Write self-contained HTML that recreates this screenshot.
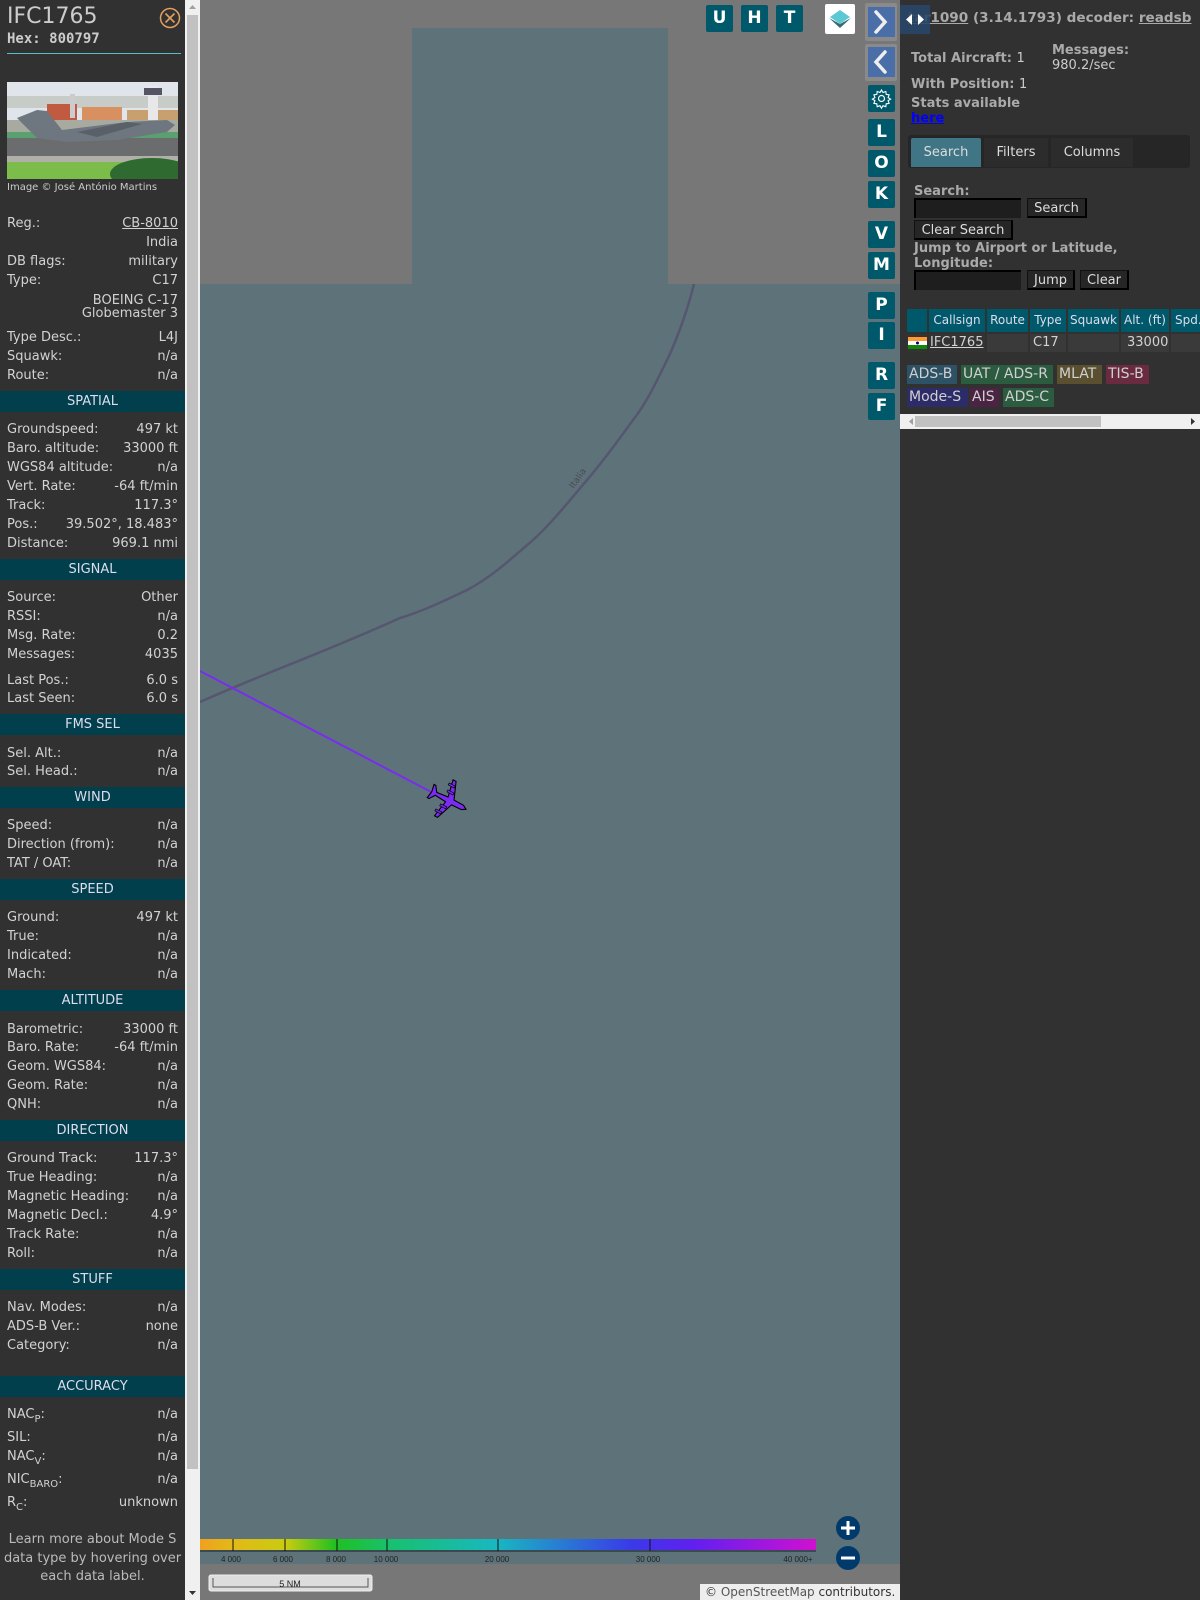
<!DOCTYPE html>
<html><head><meta charset="utf-8"><style>
*{margin:0;padding:0;box-sizing:border-box}
body{width:1200px;height:1600px;overflow:hidden;background:#313131;font-family:"DejaVu Sans","Liberation Sans",sans-serif;font-size:13px;color:#d2d2d2;position:relative}
.a{position:absolute}
#lp{position:absolute;left:0;top:0;width:185px;height:1600px;background:#313131}
.r{position:absolute;left:7px;width:171px;height:18px;line-height:18px;white-space:nowrap;margin-top:2px}
.r .v{position:absolute;right:0;top:0}
.h{position:absolute;left:0;width:185px;height:21px;line-height:21px;background:#003f4b;color:#dde;text-align:center}
sub{font-size:10px;vertical-align:-4px;line-height:0}
.mb{position:absolute;width:27px;height:27px;background:#00596b;color:#fff;font-weight:bold;font-size:17px;text-align:center;line-height:27px;border-radius:2px}
.th{position:absolute;top:309px;height:23px;line-height:23px;background:#00596b;color:#dde;text-align:center;font-size:12px}
.td{position:absolute;top:334px;height:18px;line-height:18px;background:#3a3a3a;font-size:13px;padding-left:3px}
.bd{position:absolute;height:19px;line-height:19px;font-size:14px;padding:0 2px;color:#d0d0d0}
.btn{position:absolute;height:20px;line-height:18px;background:#262626;border:1px solid #111;border-right:2px solid #000;border-bottom:2px solid #000;color:#ddd;font-size:13px;text-align:center}
.inp{position:absolute;height:20px;background:#1e1e1e;border-top:2px solid #000;border-left:2px solid #000}
.lb{position:absolute;font-weight:bold;color:#aaa;font-size:13px}
.cl{position:absolute;top:1555px;font-family:"Liberation Sans",sans-serif;font-size:8px;color:#222;transform:translateX(-50%)}
</style></head><body>

<!-- MAP -->
<div class="a" style="left:200px;top:0;width:700px;height:1600px;background:#5d7379"></div>
<div class="a" style="left:200px;top:0;width:212px;height:284px;background:#777"></div>
<div class="a" style="left:668px;top:0;width:232px;height:284px;background:#777"></div>
<div class="a" style="left:412px;top:0;width:256px;height:28px;background:#777"></div>
<div class="a" style="left:200px;top:1564px;width:700px;height:36px;background:#777"></div>
<svg class="a" style="left:0;top:0" width="900" height="1600">
<path d="M694,284 C685,320 672,350 667,360 C655,385 645,405 633,420 C615,445 600,465 587,480 C570,500 550,525 533,540 C510,560 490,578 467,590 C440,603 420,612 400,618 C330,650 260,675 200,702" fill="none" stroke="#575670" stroke-width="2.5"/>
<text x="580" y="480" transform="rotate(-55 580 480)" font-family="DejaVu Sans" font-size="9" fill="#4a4a5a" text-anchor="middle">Italia</text>
<line x1="200" y1="671" x2="437" y2="795" stroke="#7a2cf0" stroke-width="2"/>
<g transform="translate(448,800) rotate(117.3) scale(1.35)">
<path d="M0,-15 L1.8,-12 L2,-4 L15,1 L15,3.5 L2,1 L1.2,10 L5.5,13 L5.5,14.5 L0,13.5 L-5.5,14.5 L-5.5,13 L-1.2,10 L-2,1 L-15,3.5 L-15,1 L-2,-4 L-1.8,-12 Z" fill="#7a2cf0" stroke="#000" stroke-width="0.8"/>
<rect x="5" y="-1.5" width="1.6" height="5" fill="#7a2cf0" stroke="#000" stroke-width="0.5"/><rect x="10" y="0" width="1.6" height="5" fill="#7a2cf0" stroke="#000" stroke-width="0.5"/>
<rect x="-6.6" y="-1.5" width="1.6" height="5" fill="#7a2cf0" stroke="#000" stroke-width="0.5"/><rect x="-11.6" y="0" width="1.6" height="5" fill="#7a2cf0" stroke="#000" stroke-width="0.5"/>
</g>
<defs><linearGradient id="cg" x1="0" x2="1"><stop offset="0" stop-color="#f0a020"/><stop offset="0.05" stop-color="#e3b818"/><stop offset="0.14" stop-color="#c9cc10"/><stop offset="0.22" stop-color="#20c020"/><stop offset="0.31" stop-color="#18c070"/><stop offset="0.48" stop-color="#18b8c0"/><stop offset="0.7" stop-color="#3a3ae8"/><stop offset="0.8" stop-color="#6020f0"/><stop offset="1" stop-color="#d010d0"/></linearGradient></defs>
<rect x="200" y="1539" width="616" height="12" fill="url(#cg)"/>
<rect x="200" y="1550" width="616" height="2" fill="#3a4a50"/>
<g stroke="#111" stroke-width="1"><line x1="233" y1="1539" x2="233" y2="1551"/><line x1="285" y1="1539" x2="285" y2="1551"/><line x1="337" y1="1539" x2="337" y2="1551"/><line x1="387" y1="1539" x2="387" y2="1551"/><line x1="498" y1="1539" x2="498" y2="1551"/><line x1="650" y1="1539" x2="650" y2="1551"/></g>
<circle cx="848" cy="1528" r="12" fill="#003a6a"/><path d="M841,1528 H855 M848,1521 V1535" stroke="#fff" stroke-width="3"/>
<circle cx="848" cy="1558" r="12" fill="#003a6a"/><path d="M841,1558 H855" stroke="#fff" stroke-width="3"/>
<rect x="209" y="1575" width="163" height="16" rx="2" fill="#ddd" stroke="#eee"/><path d="M213,1578 V1587 H368 V1578" fill="none" stroke="#555" stroke-width="1"/>
<text x="290" y="1587" font-family="Liberation Sans" font-size="9" fill="#222" text-anchor="middle">5 NM</text>
</svg>
<div class="cl" style="left:231px">4 000</div><div class="cl" style="left:283px">6 000</div><div class="cl" style="left:336px">8 000</div><div class="cl" style="left:386px">10 000</div><div class="cl" style="left:497px">20 000</div><div class="cl" style="left:648px">30 000</div><div class="cl" style="left:798px">40 000+</div>
<div class="a" style="left:700px;top:1584px;width:200px;height:16px;background:#eee;font-size:12px;line-height:16px;color:#333;padding-left:5px">© <span style="color:#555">OpenStreetMap</span> contributors.</div>

<!-- map buttons -->
<div class="mb" style="left:706px;top:5px">U</div><div class="mb" style="left:741px;top:5px">H</div><div class="mb" style="left:776px;top:5px">T</div>
<div class="a" style="left:825px;top:4px;width:30px;height:30px;background:#fff;border-radius:2px"></div>
<svg class="a" style="left:825px;top:4px" width="30" height="30"><path d="M15,20 L26,14 L15,24 L4,14 Z" fill="#3a6a70"/><path d="M15,6 L25,13 L15,20 L5,13 Z" fill="#5cc8d4"/></svg>
<div class="a" style="left:865px;top:3px;width:32px;height:38px;background:#8a8a8a;border-radius:2px"></div>
<div class="a" style="left:868px;top:7px;width:27px;height:30px;background:#4a6fa8"></div>
<div class="a" style="left:865px;top:44px;width:32px;height:37px;background:#8a8a8a;border-radius:2px"></div>
<div class="a" style="left:868px;top:47px;width:27px;height:30px;background:#4a6fa8"></div>
<svg class="a" style="left:865px;top:0" width="32" height="85"><path d="M11,12 L20,22 L11,32" fill="none" stroke="#eee" stroke-width="3.5" stroke-linecap="round"/><path d="M20,52 L11,62 L20,72" fill="none" stroke="#eee" stroke-width="3.5" stroke-linecap="round"/></svg>
<div class="mb" style="left:868px;top:85px"></div>
<svg class="a" style="left:868px;top:85px" width="27" height="27"><circle cx="13.5" cy="13.5" r="3" fill="none" stroke="#fff" stroke-width="1.2"/><path d="M13.5,5 l1.5,2.5 2.8,-1 .4,2.9 2.9,.4 -1,2.8 2.5,1.5 -2.5,1.5 1,2.8 -2.9,.4 -.4,2.9 -2.8,-1 -1.5,2.5 -1.5,-2.5 -2.8,1 -.4,-2.9 -2.9,-.4 1,-2.8 -2.5,-1.5 2.5,-1.5 -1,-2.8 2.9,-.4 .4,-2.9 2.8,1Z" fill="none" stroke="#fff" stroke-width="1.1"/></svg>
<div class="mb" style="left:868px;top:119px">L</div><div class="mb" style="left:868px;top:150px">O</div><div class="mb" style="left:868px;top:181px">K</div>
<div class="mb" style="left:868px;top:221px">V</div><div class="mb" style="left:868px;top:252px">M</div>
<div class="mb" style="left:868px;top:292px">P</div><div class="mb" style="left:868px;top:322px">I</div>
<div class="mb" style="left:868px;top:362px">R</div><div class="mb" style="left:868px;top:393px">F</div>

<!-- RIGHT PANEL -->
<div class="a" style="left:900px;top:0;width:300px;height:1600px;background:#313131"></div>
<div class="a" style="left:908px;top:10px;font-weight:bold;font-size:13.6px;color:#aaa;white-space:nowrap"><u>tar1090</u> (3.14.1793) decoder: <u>readsb</u></div>
<div class="a" style="left:900px;top:5px;width:30px;height:29px;background:rgba(40,70,105,0.88)"></div>
<svg class="a" style="left:900px;top:5px" width="30" height="29"><path d="M6,14.5 L12,9 V20Z M24,14.5 L18,9 V20Z" fill="#fff"/></svg>
<div class="lb" style="left:911px;top:51px">Total Aircraft: <span style="font-weight:normal;color:#ccc">1</span></div>
<div class="lb" style="left:1052px;top:43px">Messages:</div>
<div class="a" style="left:1052px;top:58px;color:#ccc">980.2/sec</div>
<div class="lb" style="left:911px;top:77px">With Position: <span style="font-weight:normal;color:#ccc">1</span></div>
<div class="lb" style="left:911px;top:96px">Stats available</div>
<div class="lb" style="left:911px;top:111px;color:#00f;text-decoration:underline">here</div>
<div class="a" style="left:908px;top:135px;width:282px;height:33px;background:#262626;border-radius:3px"></div>
<div class="a" style="left:911px;top:138px;width:70px;height:29px;background:#3f7585;line-height:29px;text-align:center;color:#ddd;border-radius:2px 2px 0 0">Search</div>
<div class="a" style="left:984px;top:138px;width:64px;height:29px;background:#2c2c2c;line-height:29px;text-align:center;color:#ddd">Filters</div>
<div class="a" style="left:1051px;top:138px;width:82px;height:29px;background:#2c2c2c;line-height:29px;text-align:center;color:#ddd">Columns</div>
<div class="lb" style="left:914px;top:184px">Search:</div>
<div class="inp" style="left:914px;top:198px;width:107px"></div>
<div class="btn" style="left:1027px;top:198px;width:60px;line-height:20px">Search</div>
<div class="btn" style="left:914px;top:220px;width:99px;line-height:20px">Clear Search</div>
<div class="lb" style="left:914px;top:241px;line-height:15px">Jump to Airport or Latitude,<br>Longitude:</div>
<div class="inp" style="left:914px;top:270px;width:107px"></div>
<div class="btn" style="left:1027px;top:270px;width:48px;line-height:20px">Jump</div>
<div class="btn" style="left:1080px;top:270px;width:49px;line-height:20px">Clear</div>
<div class="th" style="left:907px;width:20px"></div>
<div class="th" style="left:929px;width:56px">Callsign</div>
<div class="th" style="left:987px;width:41px">Route</div>
<div class="th" style="left:1030px;width:36px">Type</div>
<div class="th" style="left:1068px;width:51px">Squawk</div>
<div class="th" style="left:1121px;width:48px">Alt. (ft)</div>
<div class="th" style="left:1171px;width:29px;text-align:left;padding-left:4px">Spd.</div>
<div class="td" style="left:907px;width:20px;background:#333"></div>
<svg class="a" style="left:908px;top:337px" width="19" height="12"><rect width="19" height="4" fill="#f93"/><rect y="4" width="19" height="4" fill="#fff"/><rect y="8" width="19" height="4" fill="#138808"/><circle cx="9.5" cy="6" r="1.5" fill="#008"/></svg>
<div class="td" style="left:929px;width:56px;background:#333;text-decoration:underline;padding-left:1px">IFC1765</div>
<div class="td" style="left:987px;width:41px"></div>
<div class="td" style="left:1030px;width:36px">C17</div>
<div class="td" style="left:1068px;width:51px"></div>
<div class="td" style="left:1121px;width:48px;padding-left:6px">33000</div>
<div class="td" style="left:1171px;width:29px"></div>
<div class="bd" style="left:907px;top:365px;width:50px;background:#2d5266">ADS-B</div>
<div class="bd" style="left:961px;top:365px;width:92px;background:#2b5c40">UAT / ADS-R</div>
<div class="bd" style="left:1057px;top:365px;width:45px;background:#5a5030">MLAT</div>
<div class="bd" style="left:1106px;top:365px;width:43px;background:#6a2a40">TIS-B</div>
<div class="bd" style="left:907px;top:388px;width:61px;background:#2c2c68">Mode-S</div>
<div class="bd" style="left:970px;top:388px;width:29px;background:#4a2442">AIS</div>
<div class="bd" style="left:1003px;top:388px;width:51px;background:#2c5c40">ADS-C</div>
<div class="a" style="left:900px;top:414px;width:300px;height:15px;background:#f0f0f0"></div>
<div class="a" style="left:915px;top:416px;width:186px;height:11px;background:#c1c1c1"></div>
<svg class="a" style="left:900px;top:414px" width="300" height="15"><path d="M9,7.5 L13,4 V11Z" fill="#a0a0a0"/><path d="M295,7.5 L291,4 V11Z" fill="#333"/></svg>

<!-- LEFT PANEL -->
<div id="lp">
<div class="a" style="left:7px;top:4px;font-size:22px;color:#ccc;line-height:26px">IFC1765</div>
<div class="a" style="left:7px;top:31px;font-family:'DejaVu Sans Mono',monospace;font-weight:bold;font-size:14px;color:#ccc">Hex: 800797</div>
<svg class="a" style="left:159px;top:7px" width="22" height="22"><circle cx="11" cy="11" r="9.5" fill="none" stroke="#e0a060" stroke-width="1.5"/><path d="M6.5,6.5 L15.5,15.5 M15.5,6.5 L6.5,15.5" stroke="#e0a060" stroke-width="1.6"/></svg>
<div class="a" style="left:7px;top:53px;width:174px;height:1px;background:#55c0cc"></div>
<svg class="a" style="left:7px;top:82px" width="171" height="97">
<rect width="171" height="97" fill="#dfe5ea"/>
<rect y="14" width="171" height="12" fill="#c8ccc8"/>
<rect x="40" y="22" width="30" height="16" fill="#c05a40"/><rect x="75" y="25" width="40" height="14" fill="#d89060"/><rect x="120" y="28" width="51" height="12" fill="#c8a070"/>
<rect x="141" y="4" width="10" height="35" fill="#e8e8e8"/><rect x="137" y="6" width="18" height="7" fill="#556"/>
<rect x="63" y="12" width="5" height="24" fill="#ccc"/>
<rect y="38" width="171" height="14" fill="#a8aaa0"/>
<rect y="50" width="171" height="6" fill="#5aa070"/>
<rect y="56" width="171" height="18" fill="#6a6c6e"/>
<rect y="74" width="171" height="6" fill="#b0b0a8"/>
<rect y="80" width="171" height="17" fill="#7cbc4a"/>
<ellipse cx="145" cy="92" rx="42" ry="16" fill="#2f6a30"/>
<path d="M10,36 L30,28 L40,29 L55,48 L120,40 L160,38 L168,43 L160,50 L110,58 L60,60 L30,56 Z" fill="#6e7680"/>
<path d="M70,50 L120,40 L135,42 L90,55Z" fill="#5a6068"/>
</svg>
<div class="a" style="left:7px;top:182px;font-size:10px;color:#ccc">Image © José António Martins</div>

<div class="r" style="top:213px">Reg.:<span class="v" style="text-decoration:underline">CB-8010</span></div>
<div class="r" style="top:232px"><span class="v">India</span></div>
<div class="r" style="top:251px">DB flags:<span class="v">military</span></div>
<div class="r" style="top:270px">Type:<span class="v">C17</span></div>
<div class="r" style="top:290px"><span class="v">BOEING C-17</span></div>
<div class="r" style="top:303px"><span class="v">Globemaster 3</span></div>
<div class="r" style="top:327px">Type Desc.:<span class="v">L4J</span></div>
<div class="r" style="top:346px">Squawk:<span class="v">n/a</span></div>
<div class="r" style="top:365px">Route:<span class="v">n/a</span></div>

<div class="h" style="top:391px">SPATIAL</div>
<div class="r" style="top:419px">Groundspeed:<span class="v">497 kt</span></div>
<div class="r" style="top:438px">Baro. altitude:<span class="v">33000 ft</span></div>
<div class="r" style="top:457px">WGS84 altitude:<span class="v">n/a</span></div>
<div class="r" style="top:476px">Vert. Rate:<span class="v">-64 ft/min</span></div>
<div class="r" style="top:495px">Track:<span class="v">117.3°</span></div>
<div class="r" style="top:514px">Pos.:<span class="v">39.502°, 18.483°</span></div>
<div class="r" style="top:533px">Distance:<span class="v">969.1 nmi</span></div>

<div class="h" style="top:559px">SIGNAL</div>
<div class="r" style="top:587px">Source:<span class="v">Other</span></div>
<div class="r" style="top:606px">RSSI:<span class="v">n/a</span></div>
<div class="r" style="top:625px">Msg. Rate:<span class="v">0.2</span></div>
<div class="r" style="top:644px">Messages:<span class="v">4035</span></div>
<div class="r" style="top:670px">Last Pos.:<span class="v">6.0 s</span></div>
<div class="r" style="top:688px">Last Seen:<span class="v">6.0 s</span></div>

<div class="h" style="top:714px">FMS SEL</div>
<div class="r" style="top:743px">Sel. Alt.:<span class="v">n/a</span></div>
<div class="r" style="top:761px">Sel. Head.:<span class="v">n/a</span></div>

<div class="h" style="top:787px">WIND</div>
<div class="r" style="top:815px">Speed:<span class="v">n/a</span></div>
<div class="r" style="top:834px">Direction (from):<span class="v">n/a</span></div>
<div class="r" style="top:853px">TAT / OAT:<span class="v">n/a</span></div>

<div class="h" style="top:879px">SPEED</div>
<div class="r" style="top:907px">Ground:<span class="v">497 kt</span></div>
<div class="r" style="top:926px">True:<span class="v">n/a</span></div>
<div class="r" style="top:945px">Indicated:<span class="v">n/a</span></div>
<div class="r" style="top:964px">Mach:<span class="v">n/a</span></div>

<div class="h" style="top:990px">ALTITUDE</div>
<div class="r" style="top:1019px">Barometric:<span class="v">33000 ft</span></div>
<div class="r" style="top:1037px">Baro. Rate:<span class="v">-64 ft/min</span></div>
<div class="r" style="top:1056px">Geom. WGS84:<span class="v">n/a</span></div>
<div class="r" style="top:1075px">Geom. Rate:<span class="v">n/a</span></div>
<div class="r" style="top:1094px">QNH:<span class="v">n/a</span></div>

<div class="h" style="top:1120px">DIRECTION</div>
<div class="r" style="top:1148px">Ground Track:<span class="v">117.3°</span></div>
<div class="r" style="top:1167px">True Heading:<span class="v">n/a</span></div>
<div class="r" style="top:1186px">Magnetic Heading:<span class="v">n/a</span></div>
<div class="r" style="top:1205px">Magnetic Decl.:<span class="v">4.9°</span></div>
<div class="r" style="top:1224px">Track Rate:<span class="v">n/a</span></div>
<div class="r" style="top:1243px">Roll:<span class="v">n/a</span></div>

<div class="h" style="top:1269px">STUFF</div>
<div class="r" style="top:1297px">Nav. Modes:<span class="v">n/a</span></div>
<div class="r" style="top:1316px">ADS-B Ver.:<span class="v">none</span></div>
<div class="r" style="top:1335px">Category:<span class="v">n/a</span></div>

<div class="h" style="top:1376px">ACCURACY</div>
<div class="r" style="top:1404px">NAC<sub>P</sub>:<span class="v">n/a</span></div>
<div class="r" style="top:1427px">SIL:<span class="v">n/a</span></div>
<div class="r" style="top:1446px">NAC<sub>V</sub>:<span class="v">n/a</span></div>
<div class="r" style="top:1469px">NIC<sub>BARO</sub>:<span class="v">n/a</span></div>
<div class="r" style="top:1492px">R<sub>C</sub>:<span class="v">unknown</span></div>
<div class="a" style="left:0;top:1531px;width:185px;text-align:center;line-height:18.5px;color:#bbb">Learn more about Mode S data type by hovering over each data label.</div>
</div>
<div class="a" style="left:185px;top:0;width:15px;height:1600px;background:#f0f0f0"></div>
<div class="a" style="left:187px;top:15px;width:11px;height:1454px;background:#c1c1c1"></div>
<svg class="a" style="left:185px;top:0" width="15" height="1600"><path d="M7.5,5 L11,9 H4Z" fill="#a0a0a0"/><path d="M7.5,1595 L11,1591 H4Z" fill="#333"/></svg>
</body></html>
